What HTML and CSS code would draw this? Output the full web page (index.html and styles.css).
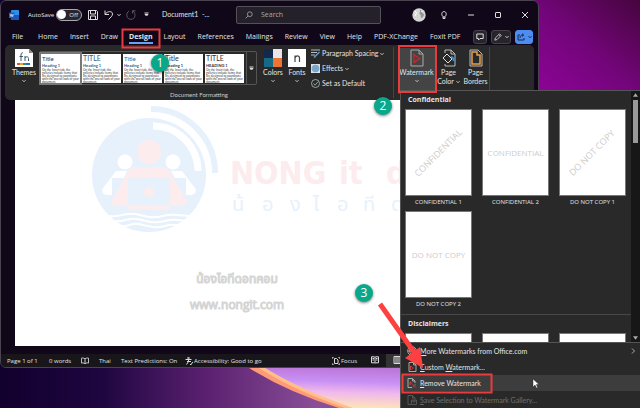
FILE: index.html
```html
<!DOCTYPE html>
<html lang="en">
<head>
<meta charset="utf-8">
<title>Document1 - Word</title>
<link rel="stylesheet" href="styles.css">
</head>
<body>
<svg class="wallpaper" viewBox="0 0 640 408" preserveAspectRatio="none" aria-hidden="true">
  <defs>
    <linearGradient id="dusk" x1="0" y1="0" x2="1" y2="0"><stop offset="0" stop-color="#12002e"/><stop offset=".16" stop-color="#1e0640"/><stop offset=".32" stop-color="#5a2070"/><stop offset=".5" stop-color="#8a5098"/></linearGradient>
    <linearGradient id="glow" x1="0" y1="0" x2="-.12" y2="1"><stop offset="0" stop-color="#bc78d8"/><stop offset=".3" stop-color="#c890f4"/><stop offset=".55" stop-color="#f0b8ec"/><stop offset=".8" stop-color="#fbd8c8"/><stop offset="1" stop-color="#fff0a8"/></linearGradient>
    <linearGradient id="plum" x1="0" y1="1" x2="1" y2="0"><stop offset="0" stop-color="#8e0498"/><stop offset=".5" stop-color="#73057a"/><stop offset="1" stop-color="#46053e"/></linearGradient>
  </defs>
  <rect width="640" height="408" fill="url(#dusk)"/>
  <rect x="530" width="110" height="92" fill="url(#plum)"/>
  <path d="M246 366Q286 392 342 409H440V366Z" fill="#ff9a78"/>
  <path d="M256 366Q292 390 348 409H440V366Z" fill="#ffc088"/>
  <path d="M262 366Q300 390 356 409H440V366Z" fill="url(#glow)"/>
</svg>

<main class="window">
  <header class="titlebar">
    <svg class="logo" viewBox="0 0 10 10"><rect x="2" y="0" width="8" height="10" rx="1" fill="#2f8fe6"/><path d="M2 5h8v4a1 1 0 0 1-1 1H3a1 1 0 0 1-1-1z" fill="#1a56b8"/><rect y="2.500" width="5.500" height="5.500" rx=".6" fill="#1b5fc4"/><path d="M1.200 4l.8 2.600.8-2.300.8 2.300.8-2.600" fill="none" stroke="#fff" stroke-width=".6"/></svg>
    <label class="autosave" for="autosave">AutoSave</label>
    <span class="switch"><input id="autosave" type="checkbox" role="switch"><span class="switch-text">Off</span></span>
    <button class="icon-btn save" aria-label="Save"><svg viewBox="0 0 10 10"><path d="M.5.5h8l1 1v8h-9zM2.500.5v3.500h5V.5M2.500 9.500V6h5v3.500"/></svg></button>
    <button class="icon-btn undo" aria-label="Undo"><svg viewBox="0 0 10 10"><path d="M1 .5V4.500H5M1.200 4.300C3 1 8.500.6 8.500 4c0 2-2 3.500-4 5.500"/></svg></button>
    <button class="icon-btn caret" aria-label="Undo list"><svg viewBox="0 0 4 4"><path d="M.5 1.200L2 2.700 3.500 1.200"/></svg></button>
    <button class="icon-btn redo" aria-label="Repeat" disabled><svg viewBox="0 0 10 10"><path d="M3 1C-.5 3 .2 9.300 5 9.300S10 3 7 1M6.500 3.500V.7H9.500"/></svg></button>
    <button class="icon-btn more" aria-label="Customize toolbar"><svg viewBox="0 0 5 5"><path d="M.5 1h4M1 2.500L2.500 4 4 2.500z"/></svg></button>
    <span class="doc-name">Document1&nbsp; -...</span>
    <label class="search">
      <svg viewBox="0 0 10 10"><circle cx="6" cy="4" r="3"/><path d="M3.800 6.200L.8 9.200"/></svg>
      <input type="search" placeholder="Search" aria-label="Search">
    </label>
    <span class="window-controls">
      <svg class="avatar" viewBox="0 0 14 14"><circle cx="7" cy="7" r="6.700" fill="#d5d5d3"/><path d="M8 2c2 0 2 1 2.500 2.500s1.500 1 1.500 2-1 3-2.500 3.500C8 9.500 9.500 8 8.500 7S7 5 8 4z" fill="#959595"/><path d="M3 3l1.500 2L3 8M9 3l2 1" stroke="#fff" fill="none"/></svg>
      <button class="icon-btn" aria-label="Tips"><svg viewBox="0 0 8 8"><path d="M3 5.500C1 4 1.500.6 4 .6S7 4 5 5.500V7.500H3zM3 6h2"/></svg></button>
      <button class="icon-btn" aria-label="Minimize"><svg viewBox="0 0 8 8"><path d="M1 4h6"/></svg></button>
      <button class="icon-btn" aria-label="Maximize"><svg viewBox="0 0 8 8"><rect x="1.500" y="1.500" width="5" height="5" rx=".5"/></svg></button>
      <button class="icon-btn" aria-label="Close"><svg viewBox="0 0 8 8"><path d="M1 1l6 6M7 1L1 7"/></svg></button>
    </span>
  </header>

  <nav class="tabs" aria-label="Ribbon tabs">
    <a href="#" class="file">File</a><a href="#">Home</a><a href="#">Insert</a><a href="#">Draw</a><a href="#" class="active" aria-current="page">Design</a><a href="#">Layout</a><a href="#">References</a><a href="#">Mailings</a><a href="#">Review</a><a href="#">View</a><a href="#">Help</a><a href="#">PDF-XChange</a><a href="#">Foxit PDF</a>
    <span class="tab-tools">
      <button class="tool" aria-label="Comments"><svg viewBox="0 0 8 8"><path d="M.8 1h6.400v4.500H4L2.500 7V5.500H.8z"/></svg></button>
      <button class="tool wide" aria-label="Editing mode"><svg viewBox="0 0 10 10"><path d="M1 9l.8-3L7 1l2 2-5.200 5.200zM6 2l2 2"/></svg><svg class="chev" viewBox="0 0 4 4"><path d="M.5 1.200L2 2.700 3.500 1.200"/></svg></button>
      <button class="tool wide share" aria-label="Share"><svg viewBox="0 0 8 8"><path d="M3 2H1v5h6V5M3 5c0-2 1-3 3-3M5 .7L6.800 2 5 3.500"/></svg><svg class="chev" viewBox="0 0 4 4"><path d="M.5 1.200L2 2.700 3.500 1.200"/></svg></button>
    </span>
  </nav>

  <section class="ribbon" aria-label="Design">
    <div class="group formatting">
      <div class="group-body">
        <button class="big themes"><svg viewBox="0 0 18 18"><path d="M0 0h14l4 4v14H0z" fill="#fff"/><path d="M14 0v4h4z" fill="#8b8b8b"/><path d="M6 12V6c0-2 1-2.500 2-2M4.500 7.500H8M10 12V7M10 9c1-2 3.500-1.500 3.500.5V12" fill="none" stroke="#3b566a"/><path d="M2 15h3" stroke="#e8503a" stroke-width="2"/><path d="M5 15h3" stroke="#f0a030" stroke-width="2"/><path d="M8 15h3" stroke="#2d9a58" stroke-width="2"/><path d="M11 15h4" stroke="#2b6cc4" stroke-width="2"/></svg><span>Themes</span><svg class="chev" viewBox="0 0 4 4"><path d="M.5 1.200L2 2.700 3.500 1.200"/></svg></button>
        <div class="gallery">
          <button class="style selected"><b>Title</b><i>Heading 1</i><small>On the Insert tab, the galleries include items that are designed to coordinate with the overall look of your document.</small></button>
          <button class="style blue large"><b>TITLE</b><i>Heading 1</i><small>On the Insert tab, the galleries include items that are designed to coordinate with the overall look of your document.</small></button>
          <button class="style blue"><b>Title</b><i>Heading 1</i><small>On the Insert tab, the galleries include items that are designed to coordinate with the overall look of your document.</small></button>
          <button class="style large"><b>Title</b><i>Heading 1</i><small>On the Insert tab, the galleries include items that are designed to coordinate with the overall look of your document.</small></button>
          <button class="style large"><b>TITLE</b><i>HEADING 1</i><small>On the Insert tab, the galleries include items that are designed to coordinate with the overall look of your document.</small></button>
          <button class="gallery-more" aria-label="More styles"><svg viewBox="0 0 5 5"><path d="M.5 1h4M1 2.500L2.500 4 4 2.500z"/></svg></button>
        </div>
        <button class="big colors"><svg viewBox="0 0 18 18"><path d="M0 0h9v9H0z" fill="#14284c"/><path d="M9 0h9v9H9z" fill="#e8e6ea"/><path d="M0 9h9v9H0z" fill="#166a86"/><path d="M9 9h9v9H9z" fill="#ee7434"/></svg><span>Colors</span><svg class="chev" viewBox="0 0 4 4"><path d="M.5 1.200L2 2.700 3.500 1.200"/></svg></button>
        <button class="big fonts"><svg viewBox="0 0 18 18"><path d="M0 0h18v18H0z" fill="#fff"/><path d="M7 13V6.500M7 9c1-3 4.500-2.500 4.500 0v4" fill="none" stroke="#444" stroke-width="1.200"/></svg><span>Fonts</span><svg class="chev" viewBox="0 0 4 4"><path d="M.5 1.200L2 2.700 3.500 1.200"/></svg></button>
        <div class="options">
          <button><svg viewBox="0 0 9 9"><path d="M0 1h9M0 3.500h6M0 6h4" stroke="#bbb"/><path d="M3 8.500L8.500 3" stroke="#5c9bd8" stroke-width="1.500"/></svg>Paragraph Spacing<svg class="chev" viewBox="0 0 4 4"><path d="M.5 1.200L2 2.700 3.500 1.200"/></svg></button>
          <button><svg viewBox="0 0 9 9"><path d="M0 0h9v9H0z" fill="#d8e0e8"/><circle cx="4.500" cy="4.500" r="3.800" fill="#7ba6cc"/></svg>Effects<svg class="chev" viewBox="0 0 4 4"><path d="M.5 1.200L2 2.700 3.500 1.200"/></svg></button>
          <button><svg viewBox="0 0 9 9"><circle cx="4.500" cy="4.500" r="4" stroke="#bbb" fill="none" stroke-width=".8"/><path d="M2.500 4.500l1.500 1.700 3-3.500" stroke="#6fbf86" fill="none"/></svg>Set as Default</button>
        </div>
      </div>
      <div class="group-label">Document Formatting</div>
    </div>
    <div class="group page-bg">
      <button class="big watermark"><svg viewBox="0 0 14 18"><path d="M1 1h8l4 4v12H1zM9 1v4h4" fill="none" stroke="#aaa"/><path d="M4 14V5M3 5l7 5-3 1-3 3" fill="none" stroke="#c9282d" stroke-width="1.200"/></svg><span>Watermark</span><svg class="chev" viewBox="0 0 4 4"><path d="M.5 1.200L2 2.700 3.500 1.200"/></svg></button>
      <button class="big page"><svg viewBox="0 0 14 18"><path d="M3 4V1h6l4 4v12H3v-2M9 1v4h4" fill="none" stroke="#bbb"/><path d="M5 5l5 5-4 4-5-5z" fill="#292929" stroke="#ddd"/><path d="M9 8c2 0 3 2 2.500 4" fill="none" stroke="#2e8fe0" stroke-width="2"/></svg><span>Page<br>Color<svg class="chev" viewBox="0 0 4 4"><path d="M.5 1.200L2 2.700 3.500 1.200"/></svg></span></button>
      <button class="big page"><svg viewBox="0 0 14 18"><path d="M1 1h8l4 4v12H1z" fill="#292929" stroke="#bbb"/><path d="M3 3h5v3h3v9H3z" fill="none" stroke="#e8a04c" stroke-width="1.500"/></svg><span>Page<br>Borders</span></button>
    </div>
  </section>

  <article class="document">
    <svg class="brand" viewBox="0 0 320 140" aria-label="NONG it">
      <circle cx="59" cy="75" r="57" fill="#e7f1fc"/>
      <path d="M61 9A64 64 0 0 1 125 73" fill="none" stroke="#e7f1fc" stroke-width="6"/>
      <path d="M63 26A45 45 0 0 1 108 71" fill="none" stroke="#fff" stroke-width="7"/>
      <circle cx="35" cy="62" r="7.500" fill="#fff"/><circle cx="83" cy="62" r="7.500" fill="#fff"/>
      <path d="M26 71h11l-3 7H22v17H16q-6-2-3-7zM92 71H81l4 7h11v17h6q6-2 3-7z" fill="#fff"/>
      <circle cx="59" cy="52" r="12" fill="#fdeced"/>
      <path d="M46 67h26q6 1 9 7l15 26q2 6-4 6H26q-6 0-4-6l15-26q3-7 9-7z" fill="#fdeced"/>
      <path d="M38 78h42v27H38z" fill="#e7f1fc"/><path d="M38 106h42v4H38z" fill="#fdeced"/><circle cx="59" cy="92" r="5" fill="#fdeced"/>
      <path d="M18 116c14 2 16-4 27-2s16 5 28 2 16 0 28 0M22 121c14 2 14-4 25-2s16 5 28 2 14 0 22 0M28 126c12 2 12-4 21-2s16 5 26 2 10 0 16 0" fill="none" stroke="#fff" stroke-width="2"/>
      <text class="brand-en" y="84"><tspan x="140">NONG</tspan> <tspan x="249">it</tspan> <tspan x="296">d</tspan></text>
      <text class="brand-th" y="111"><tspan x="142">น้</tspan><tspan x="172">อ</tspan><tspan x="200">ง</tspan><tspan x="223">ไ</tspan><tspan x="247">อ</tspan><tspan x="273">ที</tspan><tspan x="301">ด</tspan></text>
    </svg>
    <p class="caption">น้องไอทีดอทคอม<br>www.nongit.com</p>
  </article>

  <footer class="status">
    <span class="pages">Page 1 of 1</span><span class="words">0 words</span>
    <svg class="proof" viewBox="0 0 9 8"><path d="M4.500 1.500C3 .5 2 .5.5.8v5.500c1.500-.3 2.500-.3 4 .8 1.500-1.100 2.500-1.100 4-.8V.8C7 .5 6 .5 4.500 1.500zV7"/></svg>
    <span class="lang">Thai</span><span class="predict">Text Predictions: On</span>
    <span class="access"><svg viewBox="0 0 8 8"><circle cx="3.500" cy="1" r=".8"/><path d="M.5 2.500h6M3.500 2.500v2L1.500 7.500M5 7.300l1 .5 1.800-3M2 4.500h4"/></svg>Accessibility: Good to go</span>
    <button class="focus"><svg viewBox="0 0 8 8"><path d="M0 2V0h2M6 0h2v2M8 6v2H6M2 8H0V6M2.500 1.500h2l1.500 1.500v3.500H2.500z"/></svg>Focus</button>
    <button class="view-btn" aria-label="Read mode"><svg viewBox="0 0 8 8"><path d="M.5.8h3L4 1.300 4.500.8h3v6h-3L4 7.300 3.500 6.800h-3zM4 1v6M1.500 2.500H3M1.500 4H3M5 2.500h1.500M5 4h1.500"/></svg></button>
    <button class="view-btn current" aria-label="Print layout"><svg viewBox="0 0 8 8"><path d="M1 .5h6v7H1zM2 2h4M2 4h4M2 6h4"/></svg></button>
  </footer>
</main>

<aside class="menu" aria-label="Watermark gallery">
  <div class="scroll-area">
    <div class="gallery-pane">
      <h2>Confidential</h2>
      <div class="cards">
        <button class="card"><span class="sheet"><em class="diag">CONFIDENTIAL</em></span>CONFIDENTIAL 1</button>
        <button class="card"><span class="sheet"><em>CONFIDENTIAL</em></span>CONFIDENTIAL 2</button>
        <button class="card"><span class="sheet"><em class="diag">DO NOT COPY</em></span>DO NOT COPY 1</button>
        <button class="card"><span class="sheet"><em>DO NOT COPY</em></span>DO NOT COPY 2</button>
      </div>
      <h2 class="next">Disclaimers</h2>
      <div class="cards"><span class="sheet"></span><span class="sheet"></span><span class="sheet"></span></div>
    </div>
    <div class="scrollbar"><svg viewBox="0 0 6 6"><path d="M0 5l3-4 3 4z"/></svg><span class="thumb"></span><svg viewBox="0 0 6 6"><path d="M0 1l3 4 3-4z"/></svg></div>
  </div>
  <div class="commands">
    <button><svg viewBox="0 0 10 10"><circle cx="5" cy="5" r="4.300"/><path d="M.8 5h8.400M5 .7c-3 3-3 6 0 8.600 3-2.600 3-5.600 0-8.600"/></svg><span><u>M</u>ore Watermarks from Office.com</span><svg class="arrow" viewBox="0 0 6 6"><path d="M2 .5L4.500 3 2 5.500"/></svg></button>
    <button><svg viewBox="0 0 10 10"><path d="M2 .5h4.500L9 3v6.500H2zM6.500.5V3H9"/><path d="M3.500 8V4l3 2-2 1.500" class="red"/></svg><span><u>C</u>ustom <u>W</u>atermark...</span></button>
    <button class="hover"><svg viewBox="0 0 10 10"><path d="M8 5V3L5.500.5H1v9h4M5.500.5V3H8"/><path d="M3 7V4l2 1.500M5.500 6l3.500 3.500M9 6L5.500 9.500" class="red"/></svg><span><u>R</u>emove Watermark</span></button>
    <button disabled><svg viewBox="0 0 10 10"><path d="M8 4V3L5.500.5H1v9h3M5.500.5V3H8M4.500 5h5v4.500h-5zM6 5v2h2V5"/></svg><span><u>S</u>ave Selection to Watermark Gallery...</span></button>
  </div>
</aside>

<svg class="marks" viewBox="0 0 640 408" aria-hidden="true">
  <path d="M380 304L416 355" stroke="#ff4040" stroke-width="5"/><path d="M423 368l-3-21-15 11z" fill="#ff4040"/>
  <path d="M533 379v8l2-2 1.500 3 1.200-.6-1.400-2.900h2.700z" fill="#fff" stroke="#222" stroke-width=".4"/>
  <g fill="none" stroke="#ea3b3e" stroke-width="2"><rect x="122.500" y="29.500" width="37" height="18"/><rect x="399" y="46" width="37" height="46"/><rect x="402.500" y="374.500" width="89" height="18"/></g>
</svg>
<span class="step one">1</span><span class="step two">2</span><span class="step three">3</span>
</body>
</html>
```
FILE: styles.css
```css
* { box-sizing: border-box; }
body { margin: 0; min-height: 100vh; position: relative; overflow: hidden; background: #12002e; color: #e4e4e4; font: 7px/9px "Open Sans", "Noto Sans", sans-serif; }
button { border: 0; padding: 0; margin: 0; background: none; color: inherit; font: inherit; }
svg { flex: none; fill: none; stroke: #ddd; stroke-width: 1; }
.wallpaper { position: absolute; inset: 0; width: 100%; height: 100%; stroke: none; }
.wallpaper path, .wallpaper rect { stroke: none; }
.window { position: absolute; top: 0; left: 0; right: 101px; bottom: 40px; display: flex; flex-direction: column; background: #100818; border: 1px solid #4a4450; border-radius: 6px; overflow: hidden; }

/* Title bar */
.titlebar { display: flex; align-items: center; flex: 0 0 27px; padding-left: 8px; font: 6px/8px "Open Sans", sans-serif; }
.logo { width: 10px; height: 10px; margin-right: 9px; stroke: none; }
.autosave { width: 28px; }
.switch { position: relative; width: 26px; height: 12px; margin-right: 6px; }
.switch input { appearance: none; display: block; width: 26px; height: 12px; margin: 0; border: 1px solid #aaa; border-radius: 6px; background: #2a2630; }
.switch input::before { content: ""; display: block; width: 9px; height: 9px; border-radius: 50%; background: #fff; }
.switch-text { position: absolute; right: 4px; top: 2px; pointer-events: none; }
.icon-btn { display: grid; place-items: center; }
.icon-btn svg { width: 8px; height: 8px; }
.save svg, .undo svg, .redo svg { width: 10px; height: 10px; }
.undo { margin-left: 6px; }
.caret { margin-left: 3px; }
.caret svg, .chev { width: 4px; height: 4px; }
.redo { margin-left: 5px; opacity: .35; }
.more { margin-left: 8px; }
.more svg { width: 5px; height: 5px; }
.doc-name { width: 74px; margin-left: 13px; white-space: nowrap; font: 7px/9px Lato, sans-serif; }
.search { display: flex; align-items: center; gap: 8px; width: 145px; height: 18px; padding-left: 8px; border: 1px solid #56505a; border-radius: 2px; background: #25212a; }
.search svg { width: 8px; height: 8px; stroke: #aaa; }
.search input { flex: 1; min-width: 0; border: 0; padding: 0; background: none; color: #ccc; font: 7px/10px "Open Sans", sans-serif; outline: 0; }
.search input::placeholder { color: #aaa; }
.window-controls { display: flex; align-items: center; gap: 19px; margin-left: auto; padding-right: 9px; }
.window-controls .avatar { width: 14px; height: 14px; margin-right: -5px; stroke: none; }

/* Ribbon tabs */
.tabs { display: flex; align-items: center; flex: 0 0 17px; gap: 12px; padding: 0 5px 0 11px; white-space: nowrap; }
.tabs a { color: inherit; text-decoration: none; line-height: 11px; }
.tabs .file { margin-right: 3px; }
.tabs .active { font-weight: 700; box-shadow: 0 2px #6aa0f0; margin: 0 -1px; }
.tab-tools { display: flex; gap: 4px; margin-left: auto; }
.tool { display: flex; align-items: center; justify-content: center; gap: 3px; width: 14px; height: 14px; border: 1px solid #47434a; border-radius: 3px; background: #28242b; }
.tool svg { width: 8px; height: 8px; }
.tool .chev { width: 4px; height: 4px; }
.tool.wide { width: 20px; }
.tool.share { width: 18px; background: #4d8cf0; border-color: #4d8cf0; }
.share svg { stroke: #14284c; }

/* Ribbon */
.ribbon { display: flex; flex: 0 0 55px; margin: 0 4px; border-radius: 5px; background: #292929; font: 7px/9px Lato, "Open Sans", sans-serif; }
.formatting { width: 389px; height: 51px; margin-top: 2px; border-right: 1px solid #444; }
.group-body { display: flex; height: 44px; padding-top: 1px; }
.group-label { text-align: center; line-height: 8px; font-size: 6px; color: #ccc; }
.big { display: flex; flex-direction: column; align-items: center; width: 24px; }
.big > svg:first-child { width: 18px; height: 18px; margin-top: 1px; stroke: none; }
.big > span { margin-top: 1px; white-space: nowrap; }
.big > .chev { margin-top: 2px; }
.themes { width: 22px; margin-left: 8px; }
.gallery { display: flex; align-items: center; gap: 2px; width: 218px; height: 34px; margin: 3px 4px 0; border: 1px solid #555; border-radius: 2px; padding-left: 1px; }
.style { display: block; width: 39px; height: 29px; padding: 1px; overflow: hidden; background: #fff; color: #333; text-align: left; outline: 0; }
.style.selected { box-shadow: 0 0 0 2px #777; }
.style b, .style i, .style small { display: block; font-weight: 400; font-style: normal; }
.style b { height: 8px; font-size: 6px; line-height: 7px; }
.style.large b { font-size: 7px; }
.style i { font-size: 4px; line-height: 6px; font-weight: 700; white-space: nowrap; }
.style small { font-size: 3px; line-height: 3px; }
.style.blue b, .style.blue i, .style.selected i { color: #2f5d88; }
.gallery-more { flex: 1; align-self: stretch; display: grid; place-items: center; border-left: 1px solid #555; }
.gallery-more svg { width: 5px; height: 5px; }
.options { display: flex; flex-direction: column; gap: 6px; margin-left: 2px; padding-top: 1px; }
.options button { display: flex; align-items: center; gap: 2px; white-space: nowrap; }
.options svg { width: 9px; height: 9px; stroke: none; }
.options .chev, .big .chev { width: 4px; height: 4px; stroke: #ccc; }
.page-bg { display: flex; height: 47px; margin-top: 2px; padding-top: 1px; border-right: 1px solid #444; }
.big.watermark { width: 37px; margin-left: 4px; background: #444; }
.big.page { width: 27px; }
.watermark > svg:first-child, .page > svg:first-child { width: 14px; }
.page .chev { margin-left: 2px; vertical-align: middle; }

/* Page */
.document { flex: 1; min-height: 0; margin-left: 14px; background: #fff; overflow: hidden; }
.brand { display: block; width: 320px; height: 140px; margin-left: 75px; stroke: none; }
.brand-en { font: 700 32px "DejaVu Sans Condensed", "DejaVu Sans", sans-serif; fill: #fdeced; stroke: none; }
.brand-th { font: 20px "Noto Sans Thai", "Noto Sans", sans-serif; fill: #e7f1fc; stroke: none; }
.caption { width: 100px; margin: 26px 0 0 172px; color: #fff; text-align: center; white-space: nowrap; font: 12px/26px "Open Sans", "Noto Sans Thai", sans-serif; -webkit-text-stroke: 1px #d4d4d4; }

/* Status bar */
.status { display: flex; align-items: center; flex: 0 0 13px; margin-top: 8px; padding-left: 6px; background: #18161a; font: 6px/8px "Open Sans", sans-serif; white-space: nowrap; }
.status svg { width: 8px; height: 8px; }
.pages { width: 42px; }
.words { width: 32px; }
.proof { margin-right: 10px; }
.lang { width: 22px; }
.predict { width: 64px; }
.access, .focus { display: flex; align-items: center; gap: 1px; }
.access { width: 147px; }
.focus { width: 39px; }
.view-btn { height: 13px; }
.view-btn.current { margin-left: 7px; padding-left: 7px; flex: 1; text-align: left; background: #333; }

/* Watermark menu */
.menu { position: absolute; left: 400px; right: 0; top: 90px; bottom: 0; display: flex; flex-direction: column; border: solid #555; border-width: 1px 0 0 1px; background: #292929; }
.scroll-area { display: flex; flex: 1; min-height: 0; overflow: hidden; }
.gallery-pane { flex: 1; min-width: 0; }
.menu h2 { margin: 0; padding-left: 7px; font: 700 7px/18px "Open Sans", sans-serif; }
.cards { display: grid; grid-template-columns: repeat(3, 67px); column-gap: 10px; row-gap: 2px; padding-left: 4px; }
.card { display: flex; flex-direction: column; align-items: center; font: 7px/13px "Liberation Sans", sans-serif; }
.card { font: 6px/13px "Open Sans", sans-serif; }
.sheet { display: grid; place-items: center; width: 67px; height: 87px; border: 1px solid #777; background: #fff; overflow: hidden; }
.sheet em { font: 8px/10px "Open Sans", sans-serif; color: #ccc; white-space: nowrap; }
.sheet .diag { font-size: 9px; transform: rotate(-45deg); }
.menu .next { border-top: 1px solid #484848; margin-top: 3px; line-height: 18px; }
.scrollbar { display: flex; flex-direction: column; align-items: center; width: 9px; padding: 1px 0; background: #171717; }
.scrollbar svg { width: 5px; height: 6px; fill: #aaa; stroke: none; }
.thumb { width: 5px; height: 43px; margin: 2px 0 auto; background: #999; }
.commands { border-top: 1px solid #555; }
.commands button { display: flex; align-items: center; gap: 3px; width: 100%; height: 16px; padding: 0 4px 0 6px; font: 7px/10px Lato, sans-serif; text-align: left; white-space: nowrap; }
.commands button:last-child { height: 17px; }
.commands svg { width: 10px; height: 10px; stroke: #aaa; }
.commands .arrow { width: 6px; height: 6px; margin-left: auto; }
.commands .red { stroke: #d3383c; }
.commands .hover { background: #3d3d3d; }
.commands button:disabled { opacity: .35; }

/* Callouts */
.marks { position: absolute; top: 0; left: 0; width: 640px; height: 408px; stroke: none; pointer-events: none; }
.step { position: absolute; width: 18px; height: 18px; border-radius: 50%; background: #0aa88a; box-shadow: 0 1px 3px #0008; color: #fff; text-align: center; font: 12px/18px "Open Sans", sans-serif; }
.one { left: 151px; top: 54px; }
.two { left: 374px; top: 97px; }
.three { left: 355px; top: 284px; }
```
